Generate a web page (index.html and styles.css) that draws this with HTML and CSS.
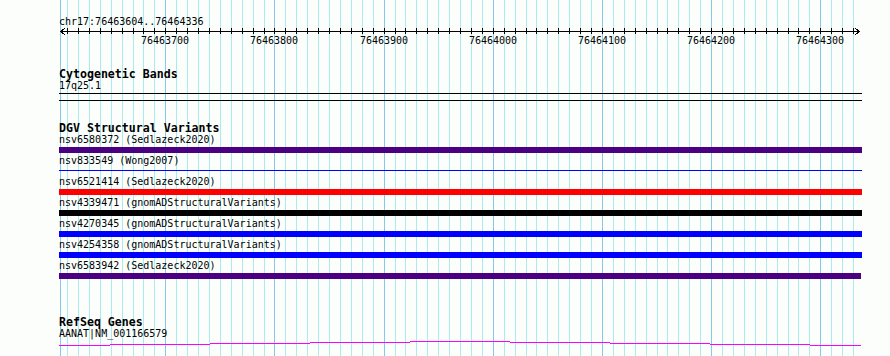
FILE: index.html
```html
<!DOCTYPE html>
<html lang="en">
<head>
    <meta charset="UTF-8">
    <title>chr17:76463604..76464336</title>
    <link rel="stylesheet" href="styles.css">
</head>
<body>
    <div class="browser">
        <!-- grid lines, one per 10bp -->
        <svg class="gridlines" width="890" height="356">
            <path class="minor" d="M67.5 0v356M78.5 0v356M89.5 0v356M100.5 0v356M111.5 0v356M122.5 0v356M133.5 0v356M143.5 0v356M154.5 0v356
                M176.5 0v356M187.5 0v356M198.5 0v356M209.5 0v356M220.5 0v356M231.5 0v356M242.5 0v356M253.5 0v356M264.5 0v356
                M285.5 0v356M296.5 0v356M307.5 0v356M318.5 0v356M329.5 0v356M340.5 0v356M351.5 0v356M362.5 0v356M373.5 0v356
                M395.5 0v356M405.5 0v356M416.5 0v356M427.5 0v356M438.5 0v356M449.5 0v356M460.5 0v356M471.5 0v356M482.5 0v356
                M504.5 0v356M515.5 0v356M526.5 0v356M536.5 0v356M547.5 0v356M558.5 0v356M569.5 0v356M580.5 0v356M591.5 0v356
                M613.5 0v356M624.5 0v356M635.5 0v356M646.5 0v356M657.5 0v356M667.5 0v356M678.5 0v356M689.5 0v356M700.5 0v356
                M722.5 0v356M733.5 0v356M744.5 0v356M755.5 0v356M766.5 0v356M777.5 0v356M788.5 0v356M798.5 0v356M809.5 0v356
                M831.5 0v356M842.5 0v356M853.5 0v356"/>
            <path class="major" d="M60.5 0v356M165.5 0v356M274.5 0v356M384.5 0v356M493.5 0v356M602.5 0v356M711.5 0v356M820.5 0v356"/>
        </svg>

        <div class="ruler">
            <div class="locus">chr17:76463604..76464336</div>
            <svg class="scalebar" width="890" height="20">
                <path class="axis" d="M60 3.5H860M65 0L60.5 3.5L65 7M855 0L859.5 3.5L855 7"/>
                <path class="axis" d="M67.5 0v6M78.5 0v6M89.5 0v6M100.5 0v6M111.5 0v6M122.5 0v6M133.5 0v6M143.5 0v6M154.5 0v6M165.5 0v6
                    M176.5 0v6M187.5 0v6M198.5 0v6M209.5 0v6M220.5 0v6M231.5 0v6M242.5 0v6M253.5 0v6M264.5 0v6M274.5 0v6
                    M285.5 0v6M296.5 0v6M307.5 0v6M318.5 0v6M329.5 0v6M340.5 0v6M351.5 0v6M362.5 0v6M373.5 0v6M384.5 0v6
                    M395.5 0v6M405.5 0v6M416.5 0v6M427.5 0v6M438.5 0v6M449.5 0v6M460.5 0v6M471.5 0v6M482.5 0v6M493.5 0v6
                    M504.5 0v6M515.5 0v6M526.5 0v6M536.5 0v6M547.5 0v6M558.5 0v6M569.5 0v6M580.5 0v6M591.5 0v6M602.5 0v6
                    M613.5 0v6M624.5 0v6M635.5 0v6M646.5 0v6M657.5 0v6M667.5 0v6M678.5 0v6M689.5 0v6M700.5 0v6M711.5 0v6
                    M722.5 0v6M733.5 0v6M744.5 0v6M755.5 0v6M766.5 0v6M777.5 0v6M788.5 0v6M798.5 0v6M809.5 0v6M820.5 0v6
                    M831.5 0v6M842.5 0v6M853.5 0v6"/>
                <text x="165" y="16">76463700</text>
                <text x="274" y="16">76463800</text>
                <text x="384" y="16">76463900</text>
                <text x="493" y="16">76464000</text>
                <text x="602" y="16">76464100</text>
                <text x="711" y="16">76464200</text>
                <text x="820" y="16">76464300</text>
            </svg>
        </div>

        <div class="track track-cyto">
            <div class="track-title">Cytogenetic Bands</div>
            <div class="feature-label">17q25.1</div>
            <div class="band"></div>
        </div>

        <div class="track track-dgv">
            <div class="track-title">DGV Structural Variants</div>
            <div class="feature">
                <div class="feature-label">nsv6580372 (Sedlazeck2020)</div>
                <div class="bar bar-indigo"></div>
            </div>
            <div class="feature">
                <div class="feature-label">nsv833549 (Wong2007)</div>
                <div class="bar bar-thin"></div>
            </div>
            <div class="feature">
                <div class="feature-label">nsv6521414 (Sedlazeck2020)</div>
                <div class="bar bar-red"></div>
            </div>
            <div class="feature">
                <div class="feature-label">nsv4339471 (gnomADStructuralVariants)</div>
                <div class="bar bar-black"></div>
            </div>
            <div class="feature">
                <div class="feature-label">nsv4270345 (gnomADStructuralVariants)</div>
                <div class="bar bar-blue"></div>
            </div>
            <div class="feature">
                <div class="feature-label">nsv4254358 (gnomADStructuralVariants)</div>
                <div class="bar bar-blue"></div>
            </div>
            <div class="feature">
                <div class="feature-label">nsv6583942 (Sedlazeck2020)</div>
                <div class="bar bar-indigo" style="width: 802px"></div>
            </div>
        </div>

        <div class="track track-refseq">
            <div class="track-title">RefSeq Genes</div>
            <div class="feature-label">AANAT|NM_001166579</div>
            <svg class="gene" width="803" height="7">
                <path d="M0 5.5H51M51 4.5H151M151 3.5H251M251 2.5H351M351 1.5H451M451 2.5H551M551 3.5H651M651 4.5H751M751 5.5H802"/>
            </svg>
        </div>
    </div>
</body>
</html>
```

FILE: styles.css
```css
* {
    margin: 0;
    padding: 0;
    box-sizing: border-box;
}

body {
    background: #fcfefc;
    color: #000;
    font-family: "DejaVu Sans Mono", "Liberation Mono", monospace;
    font-size: 10px;
    line-height: 12px;
}

.browser {
    position: relative;
    width: 890px;
    height: 356px;
    overflow: hidden;
}

.gridlines {
    position: absolute;
    top: 0;
    left: 0;
    z-index: -1;
}

.gridlines path {
    fill: none;
    stroke-width: 1;
    shape-rendering: crispEdges;
}

.gridlines .minor {
    stroke: #a9ebef;
}

.gridlines .major {
    stroke: #86c9ec;
}

/* ruler */
.ruler {
    padding-top: 16px;
}

.locus {
    padding-left: 59px;
}

.scalebar {
    display: block;
}

.scalebar .axis {
    fill: none;
    stroke: #000;
    stroke-width: 1;
    shape-rendering: crispEdges;
}

.scalebar text {
    font-family: "DejaVu Sans Mono", "Liberation Mono", monospace;
    font-size: 10px;
    text-anchor: middle;
    fill: #000;
}

/* tracks */
.track {
    padding-left: 59px;
}

.track-title {
    font-weight: bold;
    font-size: 11.6px;
    line-height: 12px;
}

.track-cyto {
    margin-top: 20px;
}

.track-dgv {
    margin-top: 21px;
}

.track-refseq {
    margin-top: 35px;
}

.band {
    width: 803px;
    height: 8px;
    margin-top: 1px;
    border-top: 1px solid #000;
    border-bottom: 1px solid #000;
}

.feature {
    padding-bottom: 2px;
}

.bar {
    width: 803px;
    height: 6px;
    margin-top: 1px;
}

.bar-indigo {
    background: #4b0082;
}

.bar-red {
    background: #ff0000;
}

.bar-black {
    background: #000;
}

.bar-blue {
    background: #0000ff;
}

.bar-thin {
    height: 1px;
    margin: 3px 0;
    background: #0000ff;
}

.gene {
    display: block;
}

.gene path {
    fill: none;
    stroke: #ff00ff;
    stroke-width: 1;
    shape-rendering: crispEdges;
}
```
